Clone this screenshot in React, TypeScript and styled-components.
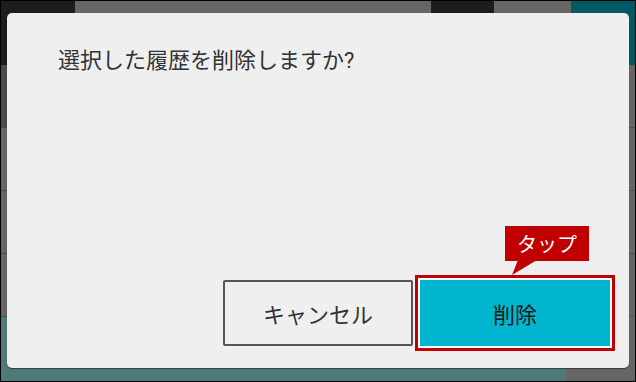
import { FC } from "react";
import styled, { createGlobalStyle } from "styled-components";

const GlobalStyle = createGlobalStyle`
  html, body {
    margin: 0;
    padding: 0;
    background: #ffffff;
  }
  * {
    box-sizing: border-box;
  }
`;

const Frame = styled.div`
  position: relative;
  width: 636px;
  height: 382px;
  border: 1px solid #000;
  overflow: hidden;
  display: flex;
  flex-direction: column;
  font-family: Roboto, "Noto Sans CJK JP", sans-serif;
`;

const Header = styled.div`
  display: flex;
  height: 64px;
`;

const HeaderCell = styled.div<{ $w?: number; $bg: string }>`
  flex: ${(p) => (p.$w ? `0 0 ${p.$w}px` : "1")};
  background: ${(p) => p.$bg};
`;

const ListRow = styled.div<{ $bg: string }>`
  display: flex;
  height: 63px;
  background: #666765;
  border-bottom: 1px solid #4e4f4d;
  &::before {
    content: "";
    width: 60px;
    background: ${(p) => p.$bg};
  }
`;

const Footer = styled.div`
  flex: 1;
  display: flex;
`;

const FooterCell = styled.div<{ $w?: number; $bg: string }>`
  flex: ${(p) => (p.$w ? `0 0 ${p.$w}px` : "1")};
  background: ${(p) => p.$bg};
`;

const Dialog = styled.div`
  position: absolute;
  left: 6px;
  top: 12px;
  width: 622px;
  height: 355px;
  background: #efefef;
  border-radius: 5px;
  box-shadow: 0 1px 1px rgba(0, 0, 0, 0.45);
  display: flex;
  flex-direction: column;
  justify-content: space-between;
  padding: 36px 19px 22px 51px;
`;

const Title = styled.div`
  font-size: 22px;
  line-height: 24px;
  color: #333;
`;

const Actions = styled.div`
  display: flex;
  justify-content: flex-end;
  gap: 7px;
`;

const Button = styled.div<{ $primary?: boolean }>`
  position: relative;
  width: 190px;
  height: 66px;
  display: flex;
  align-items: center;
  justify-content: center;
  font-size: 22px;
  border-radius: ${(p) => (p.$primary ? "0" : "2px")};
  color: ${(p) => (p.$primary ? "#1a1a1a" : "#333")};
  background: ${(p) => (p.$primary ? "#00b5cd" : "#efefef")};
  border: ${(p) => (p.$primary ? "none" : "2px solid #555")};
  box-shadow: ${(p) =>
    p.$primary ? "0 0 0 2px #fff, 0 0 0 5px #c00000" : "none"};
`;

const Callout = styled.div`
  position: absolute;
  left: 85px;
  top: -54px;
  width: 84px;
  height: 35px;
  background: #c00000;
  color: #fff;
  font-size: 20px;
  display: flex;
  align-items: center;
  justify-content: center;
`;

const Tail = styled.svg`
  position: absolute;
  left: 0;
  top: 34px;
`;

const App: FC = () => {
  return (
    <>
      <GlobalStyle />
      <Frame>
        <Header>
          <HeaderCell $w={74} $bg="#1d1d1d" />
          <HeaderCell $bg="#666765" />
          <HeaderCell $w={63} $bg="#1d1d1d" />
          <HeaderCell $w={77} $bg="#666765" />
          <HeaderCell $w={64} $bg="#005962" />
        </Header>
        <ListRow $bg="#4a4b49" />
        <ListRow $bg="#666765" />
        <ListRow $bg="#666765" />
        <ListRow $bg="#666765" />
        <Footer>
          <FooterCell $bg="#4f7a7a" />
          <FooterCell $w={69} $bg="#666765" />
        </Footer>
        <Dialog>
          <Title>選択した履歴を削除しますか?</Title>
          <Actions>
            <Button>キャンセル</Button>
            <Button $primary>
              削除
              <Callout>
                タップ
                <Tail width="40" height="16" viewBox="0 0 40 16">
                  <polygon points="13,0 32,0 7,15" fill="#c00000" />
                </Tail>
              </Callout>
            </Button>
          </Actions>
        </Dialog>
      </Frame>
    </>
  );
};

export default App;
